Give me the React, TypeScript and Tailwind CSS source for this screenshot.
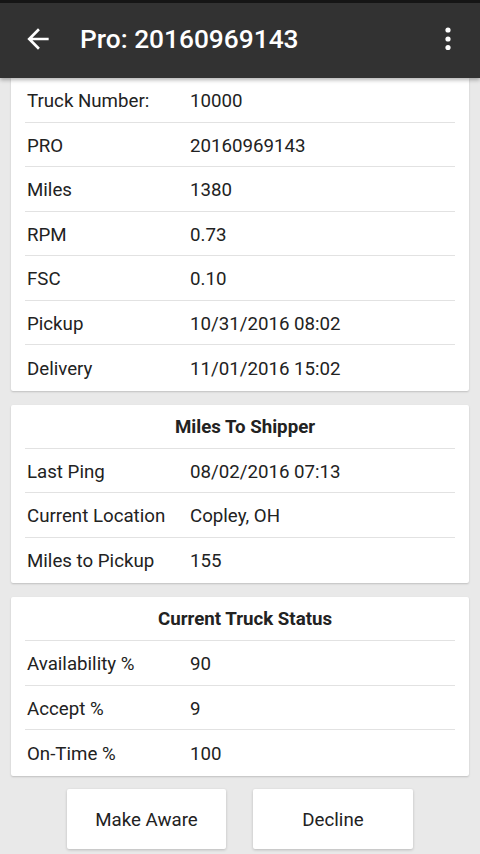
import React from "react";

const font = { fontFamily: "Roboto, 'Noto Sans', Arial, sans-serif" };

function Row({ label, value, last }: { label: string; value: string; last?: boolean }) {
  return (
    <div className={`flex items-center h-[44.5px] pt-[3px] ${last ? "" : "border-b border-[#e2e2e2]"}`}>
      <div className="w-[165px] pl-[2px] text-[18.7px] text-[#222]">{label}</div>
      <div className="text-[18.7px] text-[#222]">{value}</div>
    </div>
  );
}

function Heading({ text }: { text: string }) {
  return (
    <div className="flex items-center justify-center h-[44px] pt-[2px] pl-[10px] border-b border-[#e2e2e2] text-[18.7px] font-bold text-[#222]">
      {text}
    </div>
  );
}

export default function App() {
  return (
    <div style={font} className="w-[480px] h-[854px] bg-[#e9e9e9] flex flex-col overflow-hidden">
      <div className="relative z-10 h-[78px] bg-[#323232] border-t-[3px] border-[#151515] flex items-center shadow-[0_2px_4px_rgba(0,0,0,0.3)] shrink-0">
        <svg width="32" height="32" viewBox="0 0 24 24" className="ml-[22px] mt-[-3px]" fill="#ffffff">
          <path d="M20 11H7.83l5.59-5.59L12 4l-8 8 8 8 1.41-1.41L7.83 13H20v-2z" />
        </svg>
        <div className="ml-[26px] mt-[-2px] text-[26.3px] font-medium text-white">Pro: 20160969143</div>
        <div className="flex-1" />
        <svg width="10" height="30" viewBox="0 0 10 30" className="mr-[27px] mt-[-4px]" fill="#ffffff">
          <circle cx="5" cy="6" r="2.6" />
          <circle cx="5" cy="15" r="2.6" />
          <circle cx="5" cy="23.5" r="2.6" />
        </svg>
      </div>

      <div className="flex flex-col px-[11px]">
        <div className="bg-white rounded-b-[2px] shadow-[0_1px_2px_rgba(0,0,0,0.18)] px-[14px] pb-[1px]">
          <Row label="Truck Number:" value="10000" />
          <Row label="PRO" value="20160969143" />
          <Row label="Miles" value="1380" />
          <Row label="RPM" value="0.73" />
          <Row label="FSC" value="0.10" />
          <Row label="Pickup" value="10/31/2016 08:02" />
          <Row label="Delivery" value="11/01/2016 15:02" last />
        </div>

        <div className="mt-[14px] bg-white rounded-[2px] shadow-[0_1px_2px_rgba(0,0,0,0.18)] px-[14px] pb-[1px]">
          <Heading text="Miles To Shipper" />
          <Row label="Last Ping" value="08/02/2016 07:13" />
          <Row label="Current Location" value="Copley, OH" />
          <Row label="Miles to Pickup" value="155" last />
        </div>

        <div className="mt-[14px] bg-white rounded-[2px] shadow-[0_1px_2px_rgba(0,0,0,0.18)] px-[14px] pb-[1px]">
          <Heading text="Current Truck Status" />
          <Row label="Availability %" value="90" />
          <Row label="Accept %" value="9" />
          <Row label="On-Time %" value="100" last />
        </div>

        <div className="mt-[13px] flex justify-center gap-[27px]">
          <button className="w-[159px] h-[60px] pt-[3px] bg-white rounded-[2px] shadow-[0_1px_3px_rgba(0,0,0,0.2)] text-[18.7px] text-[#222]">
            Make Aware
          </button>
          <button className="w-[160px] h-[60px] pt-[3px] bg-white rounded-[2px] shadow-[0_1px_3px_rgba(0,0,0,0.2)] text-[18.7px] text-[#222]">
            Decline
          </button>
        </div>
      </div>
    </div>
  );
}
